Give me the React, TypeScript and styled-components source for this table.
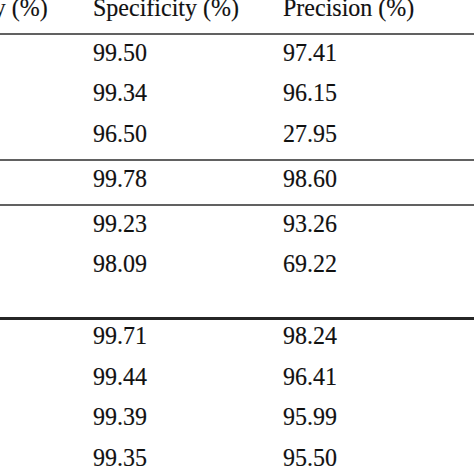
import * as React from "react";
import styled, { createGlobalStyle } from "styled-components";

const GlobalStyle = createGlobalStyle`
  html, body {
    margin: 0;
    padding: 0;
    background: #ffffff;
    overflow: hidden;
  }
`;

const COL = 190;

const Page = styled.div`
  width: 474px;
  height: 474px;
  overflow: hidden;
  background: #ffffff;
  font-family: "Liberation Serif", "Times New Roman", serif;
  font-size: 24px;
  color: #111111;
  -webkit-text-stroke: 0.15px #111111;
`;

// the table is a crop of a wider one: its first column starts off the left edge
const Sheet = styled.div`
  margin-left: -97px;
  width: ${COL * 4}px;
`;

const Head = styled.div`
  display: grid;
  grid-template-columns: repeat(4, ${COL}px);
  height: 33px;
  line-height: 17px;
  align-items: start;
`;

const Group = styled.div<{ $rule: number; $ruleColor: string; $pad: number }>`
  border-top: ${(p) => p.$rule}px solid ${(p) => p.$ruleColor};
  padding-bottom: ${(p) => p.$pad}px;
`;

const Row = styled.div<{ $h: number; $lh: number }>`
  display: grid;
  grid-template-columns: repeat(4, ${COL}px);
  height: ${(p) => p.$h}px;
  line-height: ${(p) => p.$lh}px;
  align-items: start;
`;

const Cell = styled.div`
  white-space: nowrap;
  transform: scaleY(1.05);
  transform-origin: 0 70%;
`;

type Section = {
  rule: number;
  ruleColor: string;
  pad: number;
  h: number;
  lh: number;
  rows: [string, string][];
  blank?: number;
};

const headers = ["Sensitivity (%)", "Specificity (%)", "Precision (%)", ""];

const groups: Section[] = [
  {
    rule: 2,
    ruleColor: "#616161",
    pad: 3.5,
    h: 40.3,
    lh: 36,
    rows: [
      ["99.50", "97.41"],
      ["99.34", "96.15"],
      ["96.50", "27.95"],
    ],
  },
  {
    rule: 2,
    ruleColor: "#616161",
    pad: 2,
    h: 40.3,
    lh: 36,
    rows: [["99.78", "98.60"]],
  },
  {
    rule: 2,
    ruleColor: "#616161",
    pad: 0,
    h: 40.3,
    lh: 36,
    rows: [
      ["99.23", "93.26"],
      ["98.09", "69.22"],
    ],
    blank: 30.5,
  },
  {
    rule: 3,
    ruleColor: "#262626",
    pad: 0,
    h: 40.8,
    lh: 33,
    rows: [
      ["99.71", "98.24"],
      ["99.44", "96.41"],
      ["99.39", "95.99"],
      ["99.35", "95.50"],
    ],
  },
];

export default function App() {
  return (
    <Page>
      <GlobalStyle />
      <Sheet>
        <Head>
          {headers.map((h, i) => (
            <Cell key={i}>{h}</Cell>
          ))}
        </Head>
        {groups.map((g, gi) => (
          <Group key={gi} $rule={g.rule} $ruleColor={g.ruleColor} $pad={g.pad}>
            {g.rows.map((r, ri) => (
              <Row key={ri} $h={g.h} $lh={g.lh}>
                <Cell />
                <Cell>{r[0]}</Cell>
                <Cell>{r[1]}</Cell>
                <Cell />
              </Row>
            ))}
            {g.blank ? <Row $h={g.blank} $lh={g.lh} /> : null}
          </Group>
        ))}
      </Sheet>
    </Page>
  );
}
